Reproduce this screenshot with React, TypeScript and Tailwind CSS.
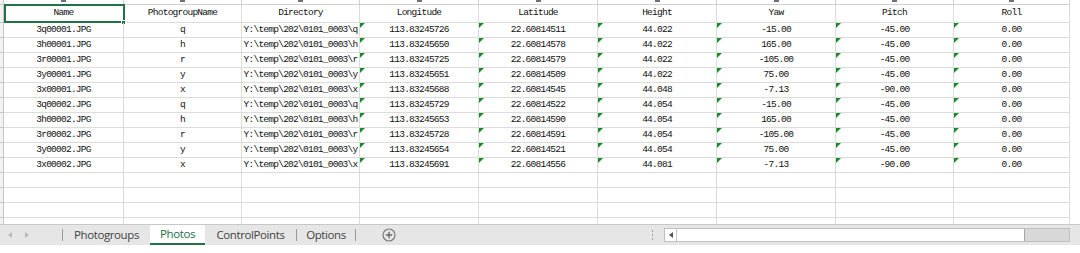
import React from "react";

const COLS = ["Name", "PhotogroupName", "Directory", "Longitude", "Latitude", "Height", "Yaw", "Pitch", "Roll"];
const WIDTHS = ["w-[120px]", "w-[118px]", "w-[118px]", "w-[119px]", "w-[119px]", "w-[119px]", "w-[119px]", "w-[118px]", "w-[116px]"];

const DIR = "Y:\\temp\\202\\0101_0003\\";
const ROWS: string[][] = [
  ["3q00001.JPG", "q", DIR + "q", "113.83245726", "22.60814511", "44.022", "-15.00", "-45.00", "0.00"],
  ["3h00001.JPG", "h", DIR + "h", "113.83245650", "22.60814578", "44.022", "165.00", "-45.00", "0.00"],
  ["3r00001.JPG", "r", DIR + "r", "113.83245725", "22.60814579", "44.022", "-105.00", "-45.00", "0.00"],
  ["3y00001.JPG", "y", DIR + "y", "113.83245651", "22.60814509", "44.022", "75.00", "-45.00", "0.00"],
  ["3x00001.JPG", "x", DIR + "x", "113.83245688", "22.60814545", "44.048", "-7.13", "-90.00", "0.00"],
  ["3q00002.JPG", "q", DIR + "q", "113.83245729", "22.60814522", "44.054", "-15.00", "-45.00", "0.00"],
  ["3h00002.JPG", "h", DIR + "h", "113.83245653", "22.60814590", "44.054", "165.00", "-45.00", "0.00"],
  ["3r00002.JPG", "r", DIR + "r", "113.83245728", "22.60814591", "44.054", "-105.00", "-45.00", "0.00"],
  ["3y00002.JPG", "y", DIR + "y", "113.83245654", "22.60814521", "44.054", "75.00", "-45.00", "0.00"],
  ["3x00002.JPG", "x", DIR + "x", "113.83245691", "22.60814556", "44.081", "-7.13", "-90.00", "0.00"],
];

function Triangle() {
  return (
    <span className="absolute left-0 top-0 h-0 w-0 border-t-[5px] border-r-[5px] border-t-[#1b8a2a] border-r-transparent" />
  );
}

export default function App() {
  return (
    <div className="w-[1080px] h-[253px] bg-white overflow-hidden flex flex-col">
      {/* grid area */}
      <div className="h-[224px] overflow-hidden flex flex-col font-['Liberation_Mono',monospace] text-[9.5px] tracking-[-0.75px] text-[#111]">
        {/* column header strip (clipped) */}
        <div className="flex h-[5px] shrink-0">
          <div className="w-[4px] border-r border-b border-[#c6c6c6] bg-[#f3f3f3]" />
          {WIDTHS.map((w, i) => (
            <div key={i} className={`${w} border-r border-b border-[#d0d0d0] flex justify-center`}>
              <span className="block w-[5px] h-[2px] bg-[#6b6f78]" />
            </div>
          ))}
        </div>
        {/* header row */}
        <div className="flex h-[18px] shrink-0 relative">
          <div className="w-[4px] border-r border-b border-[#c6c6c6] bg-[#f3f3f3]" />
          {COLS.map((c, i) => (
            <div key={c} className={`${WIDTHS[i]} border-r border-b border-[#dcdcdc] flex items-center justify-center`}>
              {c}
            </div>
          ))}
          <div className="absolute left-[4px] top-[-1px] w-[121px] h-[19px] border-2 border-[#217346]" />
          <div className="absolute left-[121px] top-[15px] w-[5px] h-[5px] bg-[#217346] border border-white" />
        </div>
        {ROWS.map((r, ri) => (
          <div key={ri} className="flex h-[15px] shrink-0">
            <div className="w-[4px] border-r border-b border-[#c6c6c6] bg-[#f3f3f3]" />
            {r.map((v, ci) => (
              <div
                key={ci}
                className={`${WIDTHS[ci]} relative border-r border-b border-[#dcdcdc] flex items-center justify-center whitespace-nowrap`}
              >
                {ci >= 3 && <Triangle />}
                {v}
              </div>
            ))}
          </div>
        ))}
        {[0, 1, 2, 3].map((k) => (
          <div key={"e" + k} className="flex h-[15px] shrink-0">
            <div className="w-[4px] border-r border-b border-[#c6c6c6] bg-[#f3f3f3]" />
            {WIDTHS.map((w, i) => (
              <div key={i} className={`${w} border-r border-b border-[#dcdcdc]`} />
            ))}
          </div>
        ))}
      </div>

      {/* sheet tab bar */}
      <div className="h-[21px] shrink-0 bg-[#e6e6e6] border-t border-[#c8c8c8] flex items-stretch font-['Open_Sans','Noto_Sans',sans-serif] text-[11.5px] tracking-[-0.4px] text-[#444]">
        <div className="w-[62px] flex items-center gap-[13px] pl-[8px]">
          <svg width="4" height="6" viewBox="0 0 4 6"><path d="M4 0 L0 3 L4 6 Z" fill="#b8b8b8" /></svg>
          <svg width="4" height="6" viewBox="0 0 4 6"><path d="M0 0 L4 3 L0 6 Z" fill="#b8b8b8" /></svg>
        </div>
        <div className="w-px my-[4px] bg-[#9a9a9a]" />
        <div className="w-[87px] flex items-center justify-center pb-[1px]">Photogroups</div>
        <div className="w-[55px] bg-white flex items-center justify-center text-[#217346] border-b-2 border-[#217346]">Photos</div>
        <div className="w-[91px] flex items-center justify-center pb-[1px]">ControlPoints</div>
        <div className="w-px my-[4px] bg-[#9a9a9a]" />
        <div className="w-[58px] flex items-center justify-center pb-[1px]">Options</div>
        <div className="w-px my-[4px] bg-[#9a9a9a]" />
        <div className="w-[296px] flex items-center pl-[26px]">
          <svg width="14" height="14" viewBox="0 0 14 14">
            <circle cx="7" cy="7" r="6" fill="none" stroke="#7a7a7a" strokeWidth="1.2" />
            <path d="M7 3.8 V10.2 M3.8 7 H10.2" stroke="#6a6a6a" strokeWidth="1.4" />
          </svg>
        </div>
        <div className="w-[12px] flex flex-col items-start justify-center gap-[2px]">
          <span className="block w-px h-[2px] bg-[#a0a0a0]" />
          <span className="block w-px h-[2px] bg-[#a0a0a0]" />
          <span className="block w-px h-[2px] bg-[#a0a0a0]" />
        </div>
        <div className="flex items-center">
          <div className="w-[406px] h-[14px] flex border border-[#c0c0c0] bg-[#d8d8d8]">
            <div className="w-[12px] bg-white border-r border-[#c8c8c8] flex items-center justify-center">
              <svg width="4" height="6" viewBox="0 0 4 6"><path d="M4 0 L0 3 L4 6 Z" fill="#555" /></svg>
            </div>
            <div className="w-[348px] bg-white border-r border-[#a8a8a8]" />
          </div>
        </div>
      </div>
      <div className="flex-1 bg-white" />
    </div>
  );
}
